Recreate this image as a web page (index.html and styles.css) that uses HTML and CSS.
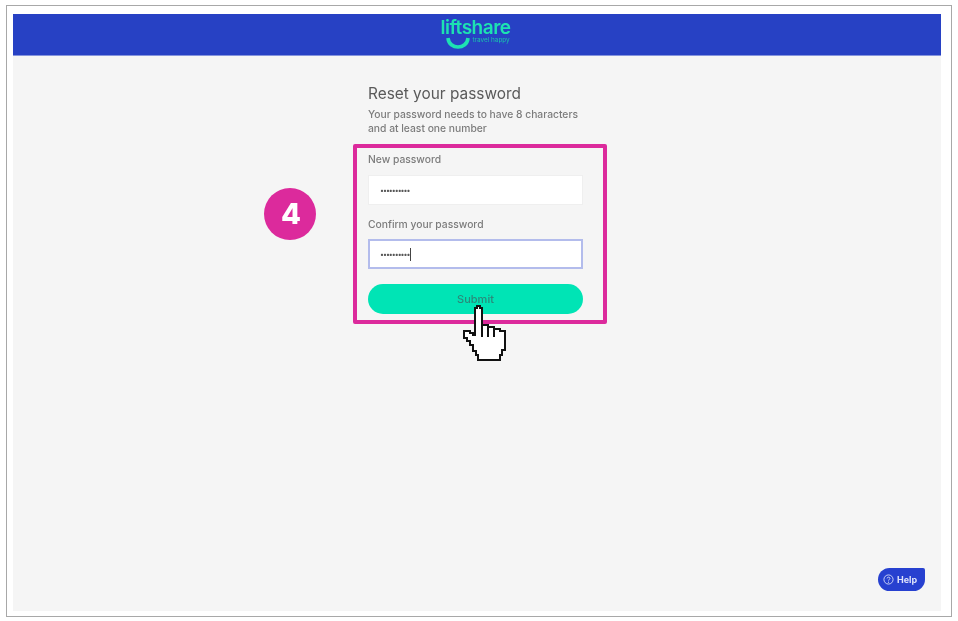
FILE: index.html
```html
<!DOCTYPE html>
<html lang="en">
<head>
  <meta charset="UTF-8" />
  <meta name="viewport" content="width=device-width, initial-scale=1.0"/>
  <title>Reset your password</title>
  <link rel="stylesheet" href="styles.css">
</head>
<body>
  <div class="frame">
    <div class="app">
      <!-- Brand bar -->
      <header class="topbar">
        <div class="logo">
          <span class="logo-name">liftshare</span>
          <div class="logo-under">
            <svg class="logo-smile" width="26" height="12" viewBox="0 0 26 12">
              <path d="M3 1 C4 13 22 13 23 1" fill="none" stroke="#1de2b2" stroke-width="3.6"/>
            </svg>
            <span class="logo-tag">travel happy</span>
          </div>
        </div>
      </header>

      <main class="page">
        <div class="reset">
          <div class="intro">
            <h1>Reset your password</h1>
            <p>Your password needs to have 8 characters<br>and at least one number</p>
          </div>

          <form class="form-box">
            <label>New password</label>
            <div class="input"><span class="dots">••••••••••</span></div>

            <label class="second">Confirm your password</label>
            <div class="input active"><span class="dots">••••••••••</span><span class="caret"></span></div>

            <button type="button">Submit</button>
          </form>
        </div>
      </main>

      <!-- Callout number and pointer, on top of the page -->
      <div class="step">4</div>

      <svg class="hand" width="46" height="58" viewBox="0 0 46 58" shape-rendering="crispEdges">
        <path d="M15 1 H18 V3 H20 V20 H26 V22 H32 V24 H38 V26 H43 V45 H40 V50 H38 V55 H16 V50 H14 V46 H11 V40 H8 V36 H5 V33 H2 V26 H8 V28 H11 V30 H13 V3 H15 Z" fill="#fff" stroke="#111" stroke-width="2"/>
        <path d="M20 20 V32 M26 22 V32 M32 24 V32" fill="none" stroke="#111" stroke-width="2"/>
      </svg>

      <a class="help" href="#">
        <svg width="11" height="11" viewBox="0 0 12 12">
          <circle cx="6" cy="6" r="5" fill="none" stroke="#d5dcf8" stroke-width="1"/>
          <path d="M4.5 4.8 C4.5 3 7.6 3 7.6 4.8 C7.6 6 6 5.9 6 7.2" fill="none" stroke="#d5dcf8" stroke-width="1"/>
          <circle cx="6" cy="8.9" r=".6" fill="#d5dcf8"/>
        </svg>
        Help
      </a>
    </div>
  </div>
</body>
</html>
```

FILE: styles.css
```css
* {
  box-sizing: border-box;
}

body {
  margin: 0;
  font-family: Inter, "Liberation Sans", sans-serif;
  background-color: #fff;
  color: #666;
}

.frame {
  width: 946px;
  height: 612px;
  margin: 5px 6px 0;
  padding: 8px 10px 5px 6px;
  border: 1px solid #a8a8a8;
}

/* the source is a scaled-up screenshot, so everything in it is a little soft */
.app {
  position: relative;
  display: flex;
  flex-direction: column;
  height: 100%;
  background-color: #f5f5f5;
  filter: blur(0.4px);
}

.topbar {
  display: flex;
  justify-content: center;
  height: 42px;
  background-color: #2741c4;
  border-bottom: 1px solid #8594dd;
  flex-shrink: 0;
}

.logo {
  display: flex;
  flex-direction: column;
  width: 72px;
  margin-left: -1px;
  color: #1de2b2;
}

.logo-name {
  font-size: 19px;
  font-weight: 600;
  line-height: 18px;
  margin-top: 5px;
  letter-spacing: -0.5px;
}

.logo-under {
  display: flex;
  gap: 2px;
  padding-left: 4px;
}

.logo-tag {
  font-size: 6.4px;
  line-height: 7px;
  color: #19c3ad;
}

.page {
  display: flex;
  justify-content: center;
  padding: 28px 0 0 6px;
}

.reset {
  width: 254px;
}

.intro {
  padding-left: 15px;
}

.intro h1 {
  margin: 0 0 3px;
  font-size: 15.4px;
  font-weight: 400;
  line-height: 20px;
  color: #5a5a5a;
}

.intro p {
  margin: 0 0 9px;
  font-size: 10.3px;
  font-weight: 500;
  line-height: 14px;
  color: #7c7c7c;
}

.form-box {
  display: flex;
  flex-direction: column;
  height: 180px;
  padding: 4px 20px 0 11px;
  border: 4px solid #dc2a9c;
  border-radius: 2px;
}

.form-box label {
  font-size: 10.3px;
  font-weight: 500;
  line-height: 14px;
  color: #7c7c7c;
  margin-bottom: 9px;
}

.form-box label.second {
  margin-top: 12px;
  margin-bottom: 8px;
}

.input {
  display: flex;
  align-items: center;
  height: 30px;
  padding-left: 11px;
  background-color: #fff;
  border: 1px solid #efefef;
}

.input.active {
  border: 2px solid #b3bcec;
  padding-left: 10px;
}

.dots {
  font-size: 7px;
  letter-spacing: -1px;
  color: #555;
}

.caret {
  width: 1px;
  height: 13px;
  margin-left: 1px;
  background-color: #444;
}

.form-box button {
  height: 30px;
  margin-top: 15px;
  border: none;
  border-radius: 15px;
  background-color: #00e4b5;
  color: #2a8a7a;
  font-family: Inter, "Liberation Sans", sans-serif;
  font-size: 11px;
  font-weight: 500;
}

.step {
  position: absolute;
  left: 251px;
  top: 174px;
  width: 52px;
  height: 52px;
  padding-left: 2px;
  border-radius: 50%;
  background-color: #dc2a9c;
  color: #fff;
  font-size: 29px;
  font-weight: 800;
  line-height: 52px;
  text-align: center;
}

.hand {
  position: absolute;
  left: 449px;
  top: 291px;
}

.help {
  position: absolute;
  right: 16px;
  bottom: 20px;
  display: flex;
  align-items: center;
  gap: 3px;
  width: 47px;
  height: 23px;
  padding-left: 5px;
  border-radius: 12px 2px 12px 12px;
  background-color: #2741d0;
  color: #dfe4fb;
  font-size: 9px;
  font-weight: 700;
  text-decoration: none;
}
```
